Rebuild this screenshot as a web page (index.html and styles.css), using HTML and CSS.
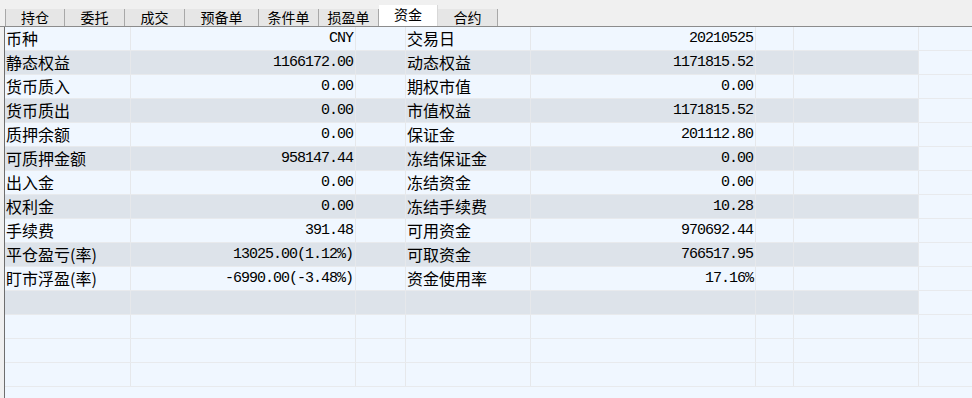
FILE: index.html
```html
<!DOCTYPE html>
<html lang="zh-CN">
<head>
  <meta charset="UTF-8" />
  <meta name="viewport" content="width=device-width, initial-scale=1.0" />
  <title>资金</title>
  <link rel="stylesheet" href="styles.css">
</head>
<body>
  <div class="tabs">
    <div class="tab">持仓</div>
    <div class="tab">委托</div>
    <div class="tab">成交</div>
    <div class="tab wide">预备单</div>
    <div class="tab">条件单</div>
    <div class="tab">损盈单</div>
    <div class="tab active">资金</div>
    <div class="tab">合约</div>
  </div>

  <div class="grid">
    <div class="row light">
      <div class="cell">币种</div><div class="cell num">CNY</div><div class="cell"></div>
      <div class="cell">交易日</div><div class="cell num">20210525</div><div class="cell"></div>
      <div class="cell"></div><div class="cell tail"></div>
    </div>
    <div class="row dark">
      <div class="cell">静态权益</div><div class="cell num">1166172.00</div><div class="cell"></div>
      <div class="cell">动态权益</div><div class="cell num">1171815.52</div><div class="cell"></div>
      <div class="cell"></div><div class="cell tail"></div>
    </div>
    <div class="row light">
      <div class="cell">货币质入</div><div class="cell num">0.00</div><div class="cell"></div>
      <div class="cell">期权市值</div><div class="cell num">0.00</div><div class="cell"></div>
      <div class="cell"></div><div class="cell tail"></div>
    </div>
    <div class="row dark">
      <div class="cell">货币质出</div><div class="cell num">0.00</div><div class="cell"></div>
      <div class="cell">市值权益</div><div class="cell num">1171815.52</div><div class="cell"></div>
      <div class="cell"></div><div class="cell tail"></div>
    </div>
    <div class="row light">
      <div class="cell">质押余额</div><div class="cell num">0.00</div><div class="cell"></div>
      <div class="cell">保证金</div><div class="cell num">201112.80</div><div class="cell"></div>
      <div class="cell"></div><div class="cell tail"></div>
    </div>
    <div class="row dark">
      <div class="cell">可质押金额</div><div class="cell num">958147.44</div><div class="cell"></div>
      <div class="cell">冻结保证金</div><div class="cell num">0.00</div><div class="cell"></div>
      <div class="cell"></div><div class="cell tail"></div>
    </div>
    <div class="row light">
      <div class="cell">出入金</div><div class="cell num">0.00</div><div class="cell"></div>
      <div class="cell">冻结资金</div><div class="cell num">0.00</div><div class="cell"></div>
      <div class="cell"></div><div class="cell tail"></div>
    </div>
    <div class="row dark">
      <div class="cell">权利金</div><div class="cell num">0.00</div><div class="cell"></div>
      <div class="cell">冻结手续费</div><div class="cell num">10.28</div><div class="cell"></div>
      <div class="cell"></div><div class="cell tail"></div>
    </div>
    <div class="row light">
      <div class="cell">手续费</div><div class="cell num">391.48</div><div class="cell"></div>
      <div class="cell">可用资金</div><div class="cell num">970692.44</div><div class="cell"></div>
      <div class="cell"></div><div class="cell tail"></div>
    </div>
    <div class="row dark">
      <div class="cell">平仓盈亏(率)</div><div class="cell num">13025.00(1.12%)</div><div class="cell"></div>
      <div class="cell">可取资金</div><div class="cell num">766517.95</div><div class="cell"></div>
      <div class="cell"></div><div class="cell tail"></div>
    </div>
    <div class="row light">
      <div class="cell">盯市浮盈(率)</div><div class="cell num">-6990.00(-3.48%)</div><div class="cell"></div>
      <div class="cell">资金使用率</div><div class="cell num">17.16%</div><div class="cell"></div>
      <div class="cell"></div><div class="cell tail"></div>
    </div>
    <div class="row dark">
      <div class="cell"></div><div class="cell"></div><div class="cell"></div>
      <div class="cell"></div><div class="cell"></div><div class="cell"></div>
      <div class="cell"></div><div class="cell tail"></div>
    </div>
    <div class="row light">
      <div class="cell"></div><div class="cell"></div><div class="cell"></div>
      <div class="cell"></div><div class="cell"></div><div class="cell"></div>
      <div class="cell"></div><div class="cell tail"></div>
    </div>
    <div class="row light">
      <div class="cell"></div><div class="cell"></div><div class="cell"></div>
      <div class="cell"></div><div class="cell"></div><div class="cell"></div>
      <div class="cell"></div><div class="cell tail"></div>
    </div>
    <div class="row light">
      <div class="cell"></div><div class="cell"></div><div class="cell"></div>
      <div class="cell"></div><div class="cell"></div><div class="cell"></div>
      <div class="cell"></div><div class="cell tail"></div>
    </div>
  </div>
</body>
</html>
```

FILE: styles.css
```css
html, body {
  margin: 0;
  height: 100%;
  overflow: hidden;
}
body {
  background-color: #f0f0f0;
  color: #000;
  font-family: "Noto Sans CJK SC", sans-serif;
}
.tabs {
  display: flex;
  align-items: flex-end;
  height: 26px;
  padding-left: 5px;
  border-bottom: 1px solid #8c8c8c;
}
.tab {
  width: 60px;
  height: 17px;
  box-sizing: border-box;
  border-right: 1px solid #a8a8a8;
  background-color: #e6e6e6;
  font-size: 14px;
  line-height: 17px;
  text-align: center;
}
.tab:first-child {
  border-left: 1px solid #a8a8a8;
}
.tab.wide {
  width: 74px;
}
.tab.active {
  width: 59px;
  height: 21px;
  line-height: 19px;
  background-color: #fff;
  border-right-color: #d8d8d8;
}
.grid {
  margin-left: 4px;
  border-left: 1px solid #6e6e6e;
  height: calc(100% - 27px);
  background-color: #f0f7ff;
}
.row {
  display: grid;
  grid-template-columns: 126px 225px 50px 125px 225px 38px 125px 1fr;
  height: 24px;
  box-sizing: border-box;
  border-bottom: 1px solid #e8eaed;
}
.light {
  background-color: #f0f7ff;
}
.dark {
  background-color: #dde3ea;
}
.cell {
  box-sizing: border-box;
  border-right: 1px solid #e6e8eb;
  padding-left: 1px;
  font-size: 16px;
  line-height: 22px;
  white-space: nowrap;
}
.cell.num {
  text-align: right;
  padding-right: 2px;
  font-family: "Liberation Mono", monospace;
  font-size: 15px;
  letter-spacing: -1px;
  line-height: 23px;
}
.cell.tail {
  background-color: #f0f7ff;
  border-right: none;
}
```
